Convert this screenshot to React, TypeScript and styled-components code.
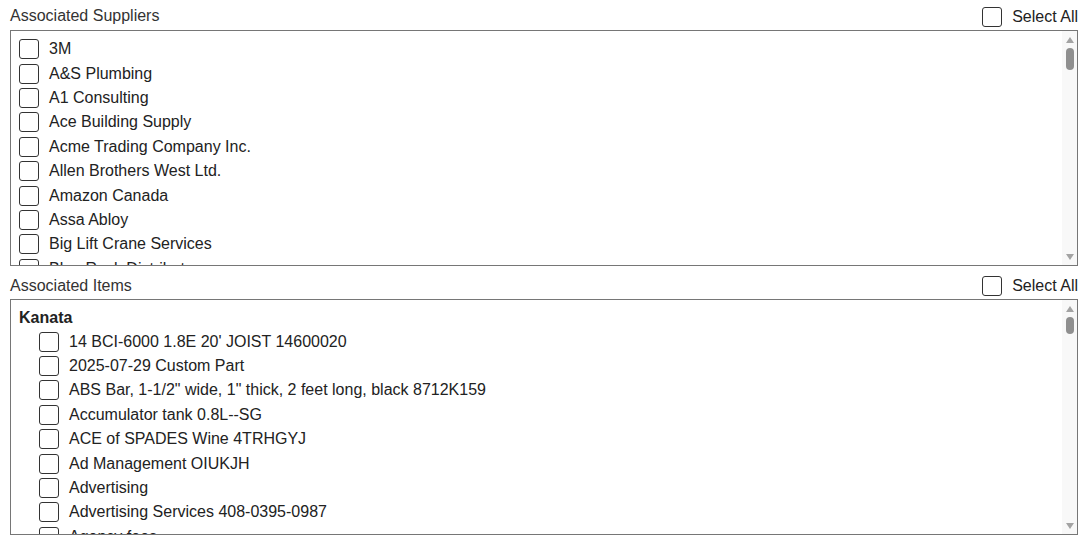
import React from "react";
import styled, { createGlobalStyle } from "styled-components";

const GlobalStyle = createGlobalStyle`
  html, body {
    margin: 0;
    padding: 0;
    background: #fff;
  }
  body {
    font-family: "Liberation Sans", Arial, sans-serif;
    font-size: 16px;
    color: #222;
  }
`;

const fillerWords = [
  "Cascade", "Delta", "Evergreen", "Frontier", "Granite", "Harbour", "Ironwood",
  "Juniper", "Keystone", "Lakeside", "Maple", "Northern", "Oakridge", "Pinnacle",
];

const supplierNames = [
  "3M",
  "A&S Plumbing",
  "A1 Consulting",
  "Ace Building Supply",
  "Acme Trading Company Inc.",
  "Allen Brothers West Ltd.",
  "Amazon Canada",
  "Assa Abloy",
  "Big Lift Crane Services",
  "Blue Rock Distributors",
  ...fillerWords.flatMap((w) =>
    ["Electric", "Supply Co.", "Hardware", "Logistics", "Industrial", "Lumber"].map((k) => `${w} ${k}`)
  ),
];

const itemNames = [
  `14 BCI-6000 1.8E 20' JOIST 14600020`,
  "2025-07-29 Custom Part",
  `ABS Bar, 1-1/2" wide, 1" thick, 2 feet long, black 8712K159`,
  "Accumulator tank 0.8L--SG",
  "ACE of SPADES Wine 4TRHGYJ",
  "Ad Management OIUKJH",
  "Advertising",
  "Advertising Services 408-0395-0987",
  "Agency fees",
  ...fillerWords.flatMap((w) =>
    ["Bracket", "Fitting", "Panel", "Valve", "Hinge", "Gasket", "Sensor", "Coupler"].map(
      (k, i) => `${w} ${k} ${1000 + i * 37}`
    )
  ),
];

const Page = styled.div`
  display: flex;
  flex-direction: column;
  gap: 3px;
  padding: 0 10px;
`;

const Section = styled.section`
  display: flex;
  flex-direction: column;
`;

const SectionHeader = styled.div`
  display: flex;
  align-items: center;
  justify-content: space-between;
  height: 30px;
`;

const SectionLabel = styled.span<{ $shift: number }>`
  color: #333;
  font-size: 16px;
  margin-top: ${(p) => p.$shift}px;
`;

const SelectAllLabel = styled.label`
  display: flex;
  align-items: center;
  gap: 10px;
  margin-top: 4px;
  color: #222;
  cursor: pointer;
`;

const Checkbox = styled.input.attrs({ type: "checkbox" })`
  appearance: none;
  margin: 0;
  width: 20px;
  height: 20px;
  flex: none;
  box-sizing: border-box;
  border: 1px solid #333;
  border-radius: 3px;
  background: #fff;
`;

const ListFrame = styled.div`
  display: flex;
  height: 236px;
  box-sizing: border-box;
  border: 1px solid #767676;
`;

const ListContent = styled.div<{ $padTop: number }>`
  flex: 1;
  min-width: 0;
  overflow: hidden;
  padding: ${(p) => p.$padTop}px 8px 0;
`;

const ScrollTrack = styled.div`
  display: flex;
  flex-direction: column;
  width: 15px;
  flex: none;
  background: #f8f8f8;
`;

const ScrollButton = styled.div<{ $down?: boolean }>`
  display: flex;
  justify-content: center;
  align-items: ${(p) => (p.$down ? "flex-end" : "flex-start")};
  height: 15px;
  box-sizing: border-box;
  padding: ${(p) => (p.$down ? "0 0 5px" : "6px 0 0")};
`;

const ScrollRail = styled.div`
  flex: 1;
  padding-top: 2px;
`;

const ScrollThumb = styled.div<{ $size: number }>`
  width: 8px;
  height: ${(p) => p.$size}px;
  margin: 0 auto;
  border-radius: 4px;
  background: #8f8f8f;
`;

const Row = styled.label<{ $indent?: boolean }>`
  display: flex;
  align-items: center;
  gap: 10px;
  height: 24.4px;
  padding-left: ${(p) => (p.$indent ? "20px" : "0")};
  white-space: nowrap;
`;

const GroupTitle = styled.div`
  display: flex;
  align-items: center;
  height: 23.4px;
  font-weight: bold;
  color: #222;
`;

const Arrow: React.FC<{ down?: boolean }> = ({ down }) => (
  <svg width="8" height="6" viewBox="0 0 8 6">
    <path d={down ? "M0 0H8L4 6Z" : "M4 0L8 6H0Z"} fill="#a3a3a3" />
  </svg>
);

type SectionProps = {
  title: string;
  labelShift: number;
  padTop: number;
  thumb: number;
  children: React.ReactNode;
};

const CheckSection: React.FC<SectionProps> = ({ title, labelShift, padTop, thumb, children }) => (
  <Section>
    <SectionHeader>
      <SectionLabel $shift={labelShift}>{title}</SectionLabel>
      <SelectAllLabel>
        <Checkbox />
        Select All
      </SelectAllLabel>
    </SectionHeader>
    <ListFrame>
      <ListContent $padTop={padTop}>{children}</ListContent>
      <ScrollTrack>
        <ScrollButton>
          <Arrow />
        </ScrollButton>
        <ScrollRail>
          <ScrollThumb $size={thumb} />
        </ScrollRail>
        <ScrollButton $down>
          <Arrow down />
        </ScrollButton>
      </ScrollTrack>
    </ListFrame>
  </Section>
);

export default function App() {
  return (
    <>
      <GlobalStyle />
      <Page>
        <CheckSection title="Associated Suppliers" labelShift={1} padTop={6} thumb={22}>
          {supplierNames.map((name) => (
            <Row key={name}>
              <Checkbox />
              {name}
            </Row>
          ))}
        </CheckSection>
        <CheckSection title="Associated Items" labelShift={3} padTop={6} thumb={17}>
          <GroupTitle>Kanata</GroupTitle>
          {itemNames.map((name) => (
            <Row key={name} $indent>
              <Checkbox />
              {name}
            </Row>
          ))}
        </CheckSection>
      </Page>
    </>
  );
}
